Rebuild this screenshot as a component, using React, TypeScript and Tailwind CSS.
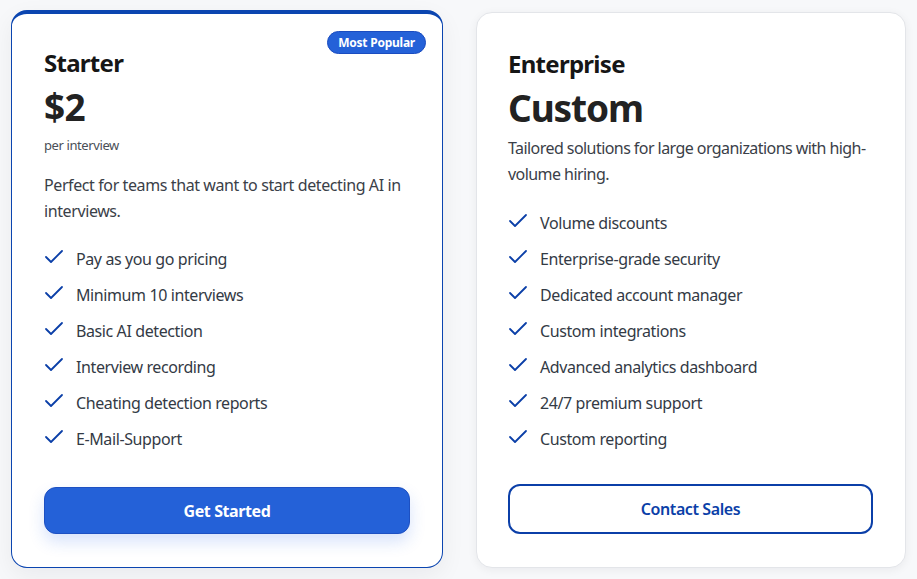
import { ReactNode } from 'react';

const starterFeatures = [
  'Pay as you go pricing',
  'Minimum 10 interviews',
  'Basic AI detection',
  'Interview recording',
  'Cheating detection reports',
  'E-Mail-Support',
];

const enterpriseFeatures = [
  'Volume discounts',
  'Enterprise-grade security',
  'Dedicated account manager',
  'Custom integrations',
  'Advanced analytics dashboard',
  '24/7 premium support',
  'Custom reporting',
];

function CheckIcon() {
  return (
    <svg className="w-6 h-6 shrink-0 text-[#0b3fa8]" viewBox="0 0 24 24" fill="none" stroke="currentColor" strokeWidth={1.8} strokeLinecap="round" strokeLinejoin="round">
      <path d="M18 4 7 15 2 10" />
    </svg>
  );
}

function FeatureList({ items }: { items: string[] }) {
  return (
    <ul className="flex flex-col gap-3">
      {items.map((item) => (
        <li key={item} className="flex items-center gap-2 h-6 text-[16px] text-[#333a45]">
          <CheckIcon />
          <span>{item}</span>
        </li>
      ))}
    </ul>
  );
}

function Card({ className, children }: { className: string; children: ReactNode }) {
  return <div className={`relative flex flex-col bg-white rounded-2xl px-8 ${className}`}>{children}</div>;
}

export default function App() {
  return (
    <div
      className="min-h-screen w-full bg-[#f7f8fa] pt-[10px] px-[11px] tracking-[-0.025em]"
      style={{ fontFamily: '"Noto Sans", "Open Sans", sans-serif' }}
    >
      <div className="flex gap-[33px] items-end">
        {/* Starter */}
        <Card className="w-[432px] h-[558px] border border-[#0b45b0] border-t-4 pt-[33px] shadow-[0_8px_24px_rgba(15,23,42,0.06)]">
          <span className="absolute top-[17px] right-[16px] h-[23px] px-[10px] flex items-center rounded-full bg-[#2461d8] border border-[#1a4cc0] text-white text-[12px] font-bold tracking-[-0.02em]">
            Most Popular
          </span>
          <h2 className="text-[24px] leading-8 font-bold text-[#161616] tracking-[-0.03em]">Starter</h2>
          <div className="mt-2 text-[37px] leading-10 font-bold text-[#222] tracking-[-0.02em]">$2</div>
          <p className="mt-2 text-[13px] leading-5 text-[#4a4f57]">per interview</p>
          <p className="mt-[17px] text-[16px] leading-[26px] text-[#3a4048]">
            Perfect for teams that want to start detecting AI in interviews.
          </p>
          <div className="mt-[23px]">
            <FeatureList items={starterFeatures} />
          </div>
          <button className="mt-9 h-[47px] w-[366px] rounded-xl bg-[#2461d8] border border-[#1d50c2] text-white font-bold text-[16px] shadow-[0_8px_16px_rgba(37,99,235,0.18)]">
            Get Started
          </button>
        </Card>

        {/* Enterprise */}
        <Card className="w-[430px] h-[556px] border border-[#e3e5e9] pt-[35px] pl-[31px] shadow-[0_2px_10px_rgba(15,23,42,0.06)]">
          <h2 className="text-[24px] leading-8 font-bold text-[#161616] tracking-[-0.03em]">Enterprise</h2>
          <div className="mt-2 text-[37px] leading-10 font-bold text-[#222] tracking-[-0.03em]">Custom</div>
          <p className="mt-[7px] text-[16px] leading-[26px] text-[#3a4048] tracking-[-0.035em]">
            Tailored solutions for large organizations with high-volume hiring.
          </p>
          <div className="mt-6">
            <FeatureList items={enterpriseFeatures} />
          </div>
          <button className="mt-[33px] h-[50px] w-full rounded-xl bg-white border-2 border-[#0b3fa8] text-[#0b3fa8] font-semibold text-[16px]">
            Contact Sales
          </button>
        </Card>
      </div>
    </div>
  );
}
